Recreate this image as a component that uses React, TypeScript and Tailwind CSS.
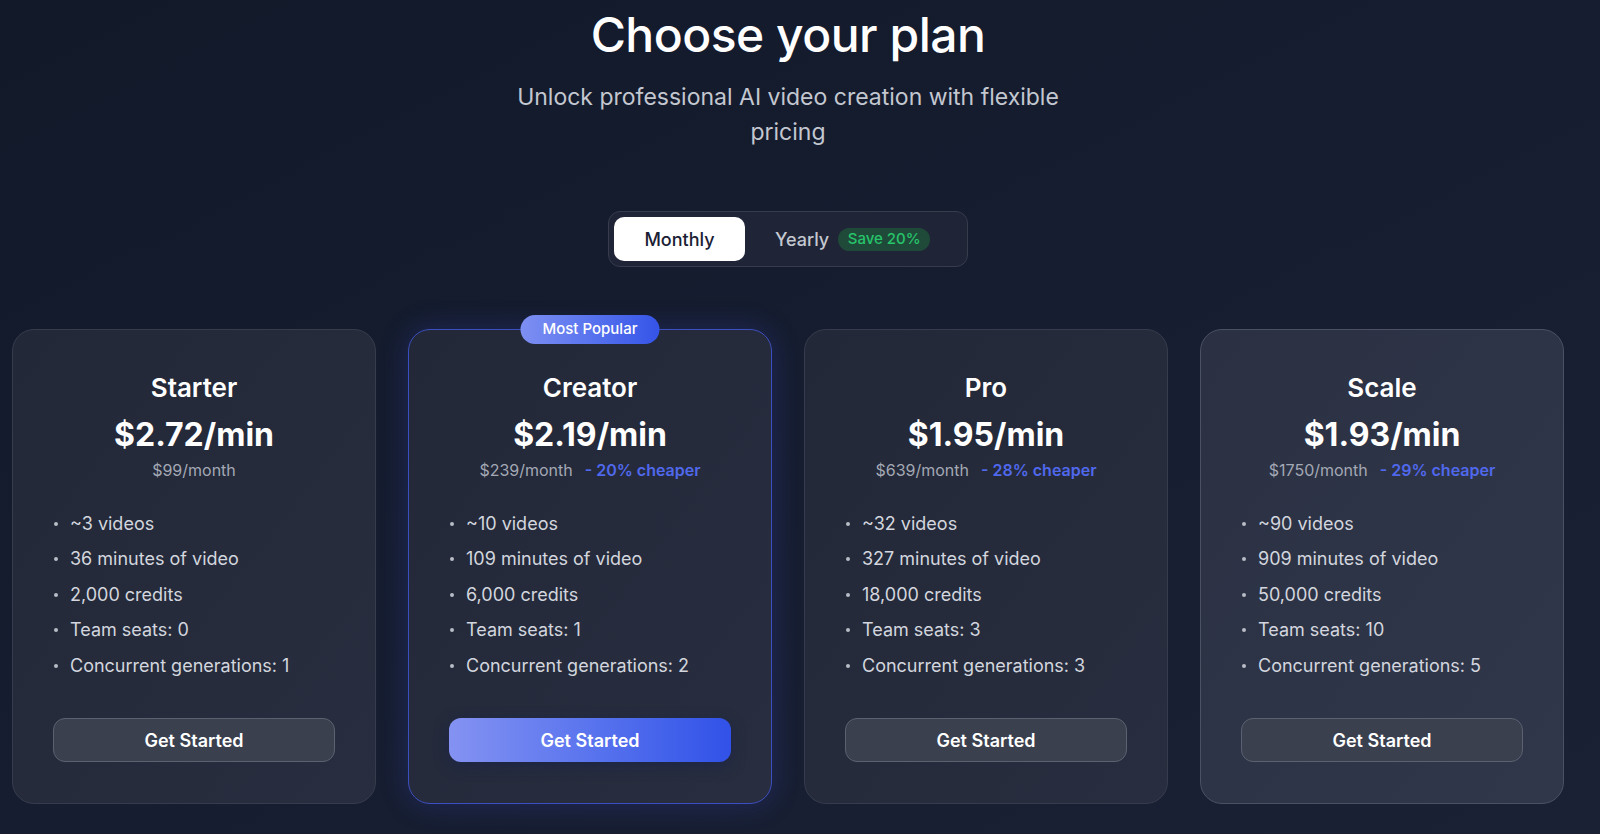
import React from "react";

type Plan = {
  name: string;
  price: string;
  monthly: string;
  cheaper?: string;
  features: string[];
  popular?: boolean;
  tone?: "scale";
};

const PLANS: Plan[] = [
  {
    name: "Starter",
    price: "$2.72/min",
    monthly: "$99/month",
    features: [
      "~3 videos",
      "36 minutes of video",
      "2,000 credits",
      "Team seats: 0",
      "Concurrent generations: 1",
    ],
  },
  {
    name: "Creator",
    price: "$2.19/min",
    monthly: "$239/month",
    cheaper: "- 20% cheaper",
    popular: true,
    features: [
      "~10 videos",
      "109 minutes of video",
      "6,000 credits",
      "Team seats: 1",
      "Concurrent generations: 2",
    ],
  },
  {
    name: "Pro",
    price: "$1.95/min",
    monthly: "$639/month",
    cheaper: "- 28% cheaper",
    features: [
      "~32 videos",
      "327 minutes of video",
      "18,000 credits",
      "Team seats: 3",
      "Concurrent generations: 3",
    ],
  },
  {
    name: "Scale",
    price: "$1.93/min",
    monthly: "$1750/month",
    cheaper: "- 29% cheaper",
    tone: "scale",
    features: [
      "~90 videos",
      "909 minutes of video",
      "50,000 credits",
      "Team seats: 10",
      "Concurrent generations: 5",
    ],
  },
];

function PlanCard({ plan }: { plan: Plan }) {
  const shell = plan.popular
    ? "border-[#3d4fc0] bg-gradient-to-br from-[#222838] to-[#282e3f] shadow-[0_0_28px_rgba(59,80,220,0.25)]"
    : plan.tone === "scale"
      ? "border-[#4a5163] bg-gradient-to-br from-[#2b3143] to-[#30374a]"
      : "border-[#363c4c] bg-gradient-to-br from-[#222837] to-[#282e3f]";

  return (
    <div
      className={`relative flex h-[475px] flex-col rounded-[22px] border px-10 pt-[41px] pb-[41px] ${shell}`}
    >
      {plan.popular && (
        <div className="absolute -top-[15px] left-1/2 flex h-[29px] w-[139px] -translate-x-1/2 items-center justify-center rounded-full bg-gradient-to-r from-[#7e8ff2] to-[#3554e8] text-[15px] font-medium text-white">
          Most Popular
        </div>
      )}
      <h3 className="text-center text-[26px] leading-[34px] font-semibold text-white">
        {plan.name}
      </h3>
      <div className="mt-[9px] text-center text-[32px] leading-[42px] font-bold text-white">
        {plan.price}
      </div>
      <div className="mt-[3px] flex justify-center gap-3 text-[16px] leading-[22px]">
        <span className="text-[#a3a8b4]">{plan.monthly}</span>
        {plan.cheaper && (
          <span className="font-semibold text-[#5068ec]">{plan.cheaper}</span>
        )}
      </div>
      <ul className="mt-[30px] flex flex-col gap-[9.4px] pl-[1px]">
        {plan.features.map((f) => (
          <li
            key={f}
            className="flex items-center gap-[12px] text-[18px] leading-[26px] text-[#d3d6de]"
          >
            <span className="h-[4px] w-[4px] rounded-full bg-[#b8bcc6]" />
            {f}
          </li>
        ))}
      </ul>
      <button
        type="button"
        className={`mt-auto h-[44px] w-full rounded-[12px] text-[18px] font-semibold text-white ${
          plan.popular
            ? "bg-gradient-to-r from-[#8492f2] to-[#3151e8] shadow-[0_4px_14px_rgba(20,30,80,0.5)]"
            : "border border-[#5b6170] bg-[#3a404e]"
        }`}
      >
        Get Started
      </button>
    </div>
  );
}

export default function App() {
  return (
    <div
      className="h-[834px] w-full overflow-hidden bg-gradient-to-br from-[#121929] via-[#161d30] to-[#1a2135]"
      style={{ fontFamily: "Inter, 'Noto Sans', sans-serif" }}
    >
      <div className="ml-3 flex w-[1552px] flex-col items-center">
        <h1 className="pt-[6px] text-[48px] leading-[58px] font-medium tracking-[-0.5px] text-white">
          Choose your plan
        </h1>
        <p className="mt-[16px] max-w-[600px] text-center text-[23px] leading-[35px] text-[#c3c7d0]">
          Unlock professional AI video creation with flexible pricing
        </p>

        <div className="mt-[61px] flex h-[56px] w-[360px] items-center rounded-[12px] border border-[#363c4c] bg-[#1f2536] px-[5px]">
          <button
            type="button"
            className="h-[44px] w-[131px] rounded-[10px] bg-white text-[18px] font-medium text-[#1a2033]"
          >
            Monthly
          </button>
          <div className="ml-[30px] flex items-center gap-[9px]">
            <span className="text-[18px] font-medium text-[#c4c8d0]">
              Yearly
            </span>
            <span className="flex h-[23px] w-[92px] items-center justify-center rounded-full bg-[#1f4a3a] text-[15px] font-medium text-[#27c46a]">
              Save 20%
            </span>
          </div>
        </div>

        <div className="mt-[62px] grid w-full grid-cols-4 gap-8">
          {PLANS.map((p) => (
            <PlanCard key={p.name} plan={p} />
          ))}
        </div>
      </div>
    </div>
  );
}
